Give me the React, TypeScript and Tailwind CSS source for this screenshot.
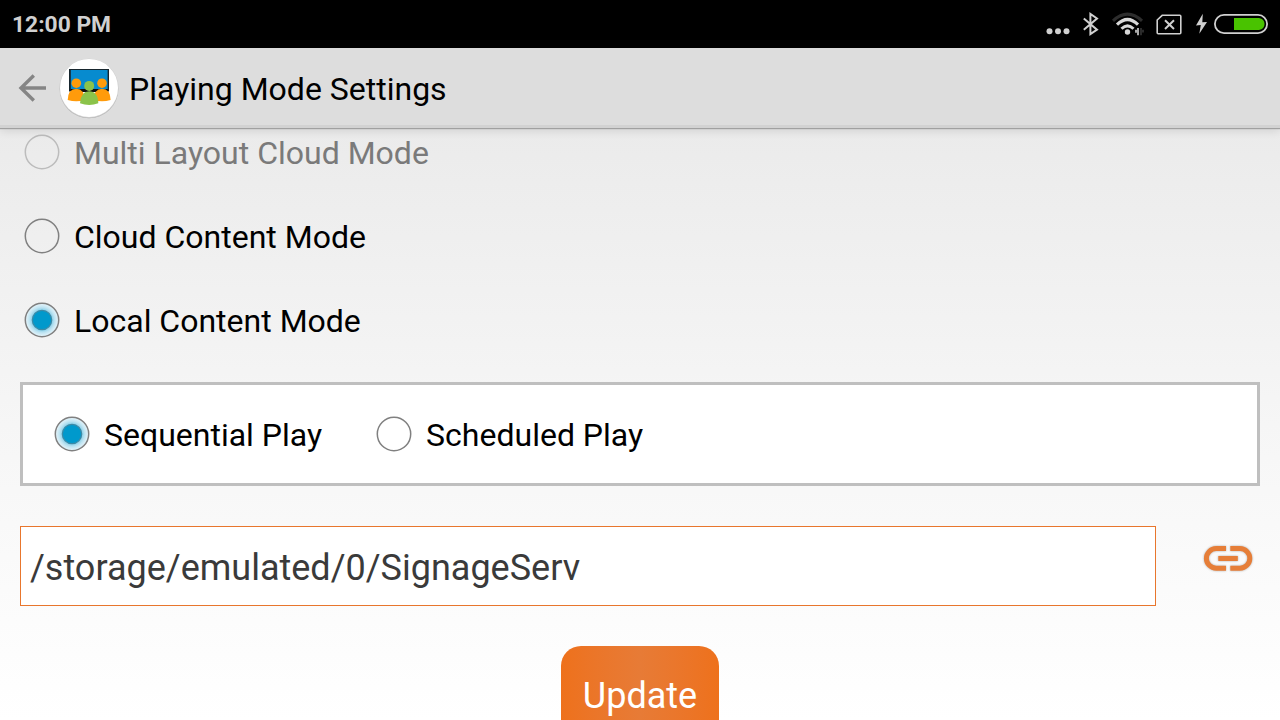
import React from "react";

function Radio({ checked = false, disabled = false }: { checked?: boolean; disabled?: boolean }) {
  return (
    <svg width="36" height="36" viewBox="0 0 36 36" className="shrink-0">
      <defs>
        <radialGradient id="radioGlow">
          <stop offset="0.55" stopColor="#7fcbe6" />
          <stop offset="0.76" stopColor="#bfe4f2" />
          <stop offset="1" stopColor="#eaf6fb" />
        </radialGradient>
      </defs>
      <circle cx="18" cy="18" r="16.7" fill={checked ? "url(#radioGlow)" : "none"} stroke={disabled ? "#bcbcbc" : "#808080"} strokeWidth="1.5" />
      {checked && <circle cx="18" cy="18" r="9.7" fill="#0099cc" stroke="#3d8aa6" strokeWidth="1.2" />}
    </svg>
  );
}

function Option({ label, checked, disabled }: { label: string; checked?: boolean; disabled?: boolean }) {
  return (
    <div className="flex h-12 items-center gap-[14px]">
      <Radio checked={checked} disabled={disabled} />
      <span className={disabled ? "pt-[2px] text-[32px] leading-none text-[#7a7a7a]" : "pt-[2px] text-[32px] leading-none text-black"}>{label}</span>
    </div>
  );
}

function StatusIcons() {
  return (
    <div className="flex h-12 items-center">
      <svg width="34" height="48" viewBox="1044 0 34 48" fill="#d0d0d0">
        <circle cx="1049.5" cy="31.3" r="3" />
        <circle cx="1058" cy="31.3" r="3" />
        <circle cx="1066.5" cy="31.3" r="3" />
      </svg>
      <svg width="30" height="48" viewBox="1078 0 30 48" fill="none" stroke="#d0d0d0" strokeWidth="2">
        <path d="M1083.8 18.4 L1097 29.7 L1090.4 34.2 V14 L1097 18.5 L1083.8 29.8" />
      </svg>
      <svg width="44" height="48" viewBox="1108 0 44 48" fill="none">
        <path d="M1113 20.8 Q1127.5 7.5 1142 20.8" stroke="#2d2d2d" strokeWidth="3" />
        <path d="M1117 24.6 Q1127.5 14.4 1138 24.6" stroke="#d8d8d8" strokeWidth="3.1" />
        <path d="M1121.5 28.8 Q1127.5 22.8 1133.5 28.8" stroke="#d8d8d8" strokeWidth="3" />
        <circle cx="1127.5" cy="32" r="2.7" fill="#d8d8d8" />
        <path d="M1138 28 V35.2 M1136 29.8 V32.8" stroke="#bdbdbd" strokeWidth="1.8" />
        <path d="M1141 28 V35.2 M1143 29.8 V32.6" stroke="#353535" strokeWidth="1.6" />
      </svg>
      <svg width="38" height="48" viewBox="1152 0 38 48" fill="none" stroke="#d0d0d0">
        <path d="M1162.2 15.3 H1179.8 Q1180.8 15.3 1180.8 16.3 V32.8 Q1180.8 33.8 1179.8 33.8 H1158.2 Q1157.2 33.8 1157.2 32.8 V20 Z" strokeWidth="1.6" />
        <path d="M1165 20.3 L1174 29 M1174 20.3 L1165 29" strokeWidth="2" />
      </svg>
      <svg width="22" height="48" viewBox="1190 0 22 48" fill="#d0d0d0">
        <path d="M1202.8 13.8 L1196 25.4 L1200.8 25.1 L1199.3 33.8 L1207 22 L1202.3 22.3 Z" />
      </svg>
      <svg width="68" height="48" viewBox="1212 0 68 48">
        <rect x="1214.9" y="14.9" width="52.2" height="18.2" rx="9.1" fill="none" stroke="#d0d0d0" strokeWidth="1.8" />
        <path d="M1234 18 H1259 Q1264.5 18.8 1264.5 24 Q1264.5 29.2 1259 30 H1234 Z" fill="#49c300" />
      </svg>
    </div>
  );
}

function AppLogo() {
  return (
    <svg width="60" height="62" viewBox="59 57 60 62" className="mt-[3px] shrink-0">
      <circle cx="89" cy="89.1" r="29.2" fill="#aaa" />
      <circle cx="89" cy="88.4" r="29.6" fill="#cbcbcb" />
      <circle cx="89" cy="87.9" r="29" fill="#fff" />
      <rect x="69" y="69" width="40" height="22.5" fill="#17262e" />
      <rect x="70.8" y="70" width="36.8" height="19" fill="#078bcf" />
      <path d="M71 89 H107.6 V92 H71Z" fill="#111" />
      <g fill="#ff9b0b">
        <circle cx="76.3" cy="83.2" r="4.8" />
        <path d="M67.7 100 Q67.9 89 76.3 88.7 Q84.5 89 84.8 100 Q76.3 102.5 67.7 100Z" />
        <circle cx="102" cy="83.2" r="4.8" />
        <path d="M93.5 100 Q93.8 89 102 88.7 Q110.4 89 110.6 100 Q102 102.5 93.5 100Z" />
      </g>
      <g fill="#8bc34a">
        <circle cx="89.2" cy="85.9" r="5" />
        <path d="M80 103.3 Q80.5 91.5 89.2 91.2 Q98 91.5 98.3 103.3 Q89.2 106.8 80 103.3Z" />
      </g>
    </svg>
  );
}

export default function App() {
  return (
    <div className="flex h-[720px] w-[1280px] flex-col overflow-hidden bg-white font-['Roboto',sans-serif]">
      <div className="flex h-12 shrink-0 items-center justify-between bg-black pl-3">
        <span className="pt-[3px] text-[22.8px] leading-none font-bold text-[#d0d0d0]">12:00 PM</span>
        <StatusIcons />
      </div>
      <header className="z-10 flex h-20 shrink-0 items-center border-b-[3px] border-[#d2d2d2] bg-[#dddddd] pl-4 shadow-[0_1px_1px_#a0a0a0,0_3px_9px_rgba(0,0,0,0.11)]">
        <svg width="43" height="40" viewBox="16 68 43 40" fill="none" stroke="#858585" strokeWidth="3.4" className="mt-[3px] shrink-0">
          <path d="M46 88 H21 M33.8 75.5 L21 88 L33.8 100.5" />
        </svg>
        <AppLogo />
        <h1 className="pt-[4px] pl-[10px] text-[32px] leading-none font-normal text-black">Playing Mode Settings</h1>
      </header>
      <main className="flex grow flex-col bg-linear-to-b from-[#ebebeb] via-[#f6f6f6] to-white px-5">
        <div className="flex flex-col gap-9 pl-1">
          <Option label="Multi Layout Cloud Mode" disabled />
          <Option label="Cloud Content Mode" />
          <Option label="Local Content Mode" checked />
        </div>
        <section className="mt-[38px] flex h-[104px] shrink-0 items-center gap-[54px] border-[3px] border-[#bfbfbf] bg-white pl-[31px]">
          <Option label="Sequential Play" checked />
          <Option label="Scheduled Play" />
        </section>
        <div className="mt-10 flex h-20 shrink-0">
          <div className="flex w-[1136px] items-center border border-[#e8762d] bg-white pt-1 pl-[9px] text-[36px] leading-none text-[#3a3a3a]">/storage/emulated/0/SignageServ</div>
          <svg width="56" height="40" viewBox="1200 538 56 40" fill="none" stroke="#e67e38" strokeWidth="5" className="mt-3 ml-11 shrink-0 drop-shadow-[0_0.5px_1px_rgba(0,0,0,0.3)]">
            <path d="M1226 548.6 H1216.2 A9.8 9.8 0 0 0 1216.2 568.2 H1226 M1230.3 548.6 H1240 A9.8 9.8 0 0 1 1240 568.2 H1230.3 M1218.3 558.4 H1237.8" />
          </svg>
        </div>
        <button className="mt-10 -mb-7 flex h-[100px] w-[158px] shrink-0 items-center justify-center self-center rounded-[20px] bg-linear-to-r from-[#ee711b] via-[#e77b36] to-[#ee711b] text-[36px] leading-none text-white">Update</button>
      </main>
    </div>
  );
}
